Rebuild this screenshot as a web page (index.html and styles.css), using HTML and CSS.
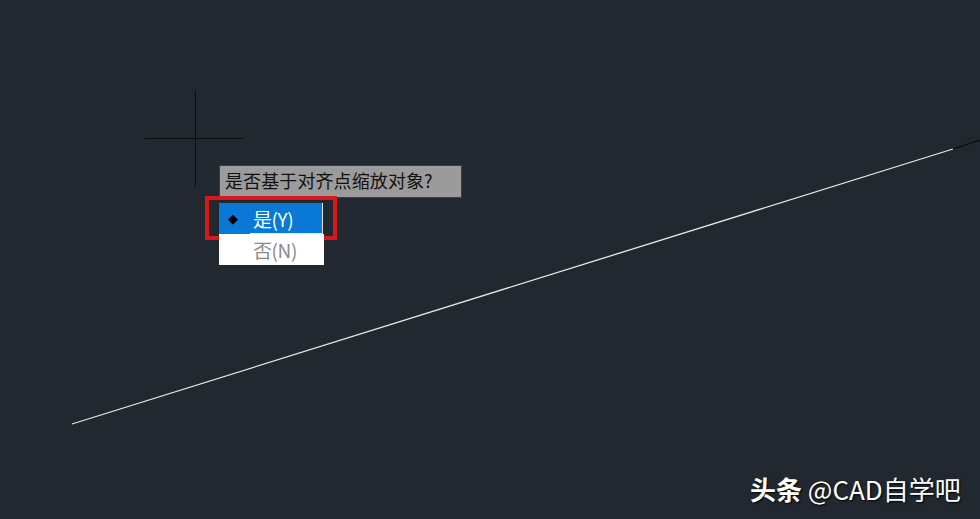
FILE: index.html
```html
<!DOCTYPE html>
<html lang="zh">
<head>
<meta charset="utf-8">
<link rel="stylesheet" href="styles.css">
</head>
<body>
<div class="canvas">
  <svg class="drawing" width="980" height="519" viewBox="0 0 980 519">
    <line x1="72" y1="424" x2="953" y2="149" stroke="#e6e8ea" stroke-width="1.3"/>
    <line x1="953" y1="149" x2="980" y2="140" stroke="#0b0d10" stroke-width="1.3"/>
    <line x1="195.5" y1="91" x2="195.5" y2="187" stroke="#0a0c0e" stroke-width="1"/>
    <line x1="145" y1="138.5" x2="243" y2="138.5" stroke="#0a0c0e" stroke-width="1"/>
  </svg>
  <div class="prompt">是否基于对齐点缩放对象?</div>
  <div class="highlight"></div>
  <div class="menu">
    <div class="item active"><span class="bullet">◆</span><span class="label">是(Y)</span></div>
    <div class="item"><span class="bullet"></span><span class="label">否(N)</span></div>
  </div>
  <div class="mark"><b>头条</b> @CAD自学吧</div>
</div>
</body>
</html>
```

FILE: styles.css
```css
html, body {
  margin: 0;
  padding: 0;
  width: 980px;
  height: 519px;
  overflow: hidden;
  background: #212830;
}
.canvas {
  position: relative;
  width: 980px;
  height: 519px;
  background: #212830;
  font-family: "Noto Sans CJK SC", "Liberation Sans", sans-serif;
}
.drawing {
  position: absolute;
  left: 0;
  top: 0;
}
.prompt {
  position: absolute;
  left: 219px;
  top: 165px;
  width: 243px;
  height: 33px;
  box-sizing: border-box;
  background: #9b9b9b;
  border: 1px solid #3c3f42;
  color: #111;
  font-family: "Noto Sans CJK SC", sans-serif;
  font-size: 18px;
  line-height: 29px;
  padding-left: 5px;
  white-space: nowrap;
  letter-spacing: 0.1px;
}
.highlight {
  position: absolute;
  left: 205px;
  top: 196px;
  width: 132px;
  height: 44px;
  box-sizing: border-box;
  border: 4px solid #d9181c;
}
.menu {
  position: absolute;
  left: 219px;
  top: 203px;
  width: 105px;
  display: flex;
  flex-direction: column;
}
.item {
  height: 31px;
  display: flex;
  align-items: center;
  background: #ffffff;
  color: #8a8a8a;
  font-size: 19px;
  box-sizing: border-box;
}
.item.active {
  width: 104px;
  background: #0a78d6;
  color: #ffffff;
  border-right: 1px solid #dfe8f0;
  position: relative;
}
.item.active::after {
  content: "";
  position: absolute;
  left: 31px;
  right: 0;
  bottom: 0;
  height: 1px;
  background: #e8eef4;
}
.bullet {
  width: 34px;
  text-align: center;
  color: #000;
  font-size: 13px;
  font-family: "DejaVu Sans", sans-serif;
  padding-right: 6px;
  box-sizing: border-box;
}
.label {
  white-space: nowrap;
  letter-spacing: -0.4px;
}
.mark {
  position: absolute;
  left: 750px;
  top: 469px;
  color: #ffffff;
  font-size: 26px;
  line-height: 40px;
  white-space: nowrap;
  text-shadow: 1px 1px 2px rgba(0,0,0,0.9);
}
.mark b {
  font-weight: 700;
}
```
